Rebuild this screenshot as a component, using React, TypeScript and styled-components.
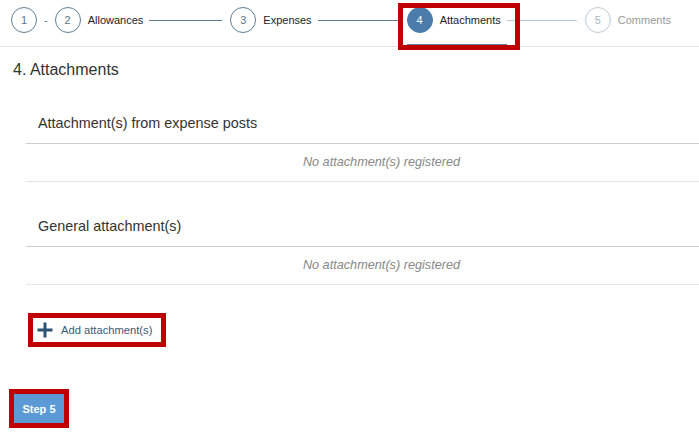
import React from 'react';
import styled, { createGlobalStyle, css } from 'styled-components';

const GlobalStyle = createGlobalStyle`
  html, body {
    margin: 0;
    padding: 0;
    background: #fff;
    font-family: "Liberation Sans", Arial, sans-serif;
    color: #333;
    overflow: hidden;
  }
`;

const ANNOTATION = '#c00000';

const Page = styled.div`
  width: 699px;
  height: 444px;
  display: flex;
  flex-direction: column;
`;

// ---- stepper ----

const Stepper = styled.nav`
  display: flex;
  height: 47px;
  box-sizing: border-box;
  border-bottom: 1px solid #dde4ea;
  padding-left: 11px;
`;

type StepState = 'done' | 'active' | 'todo';

const Step = styled.div<{ $state: StepState; $bare?: boolean }>`
  position: relative;
  display: flex;
  align-items: center;
  gap: 7px;
  padding: 0 ${(p) => (p.$bare ? 0 : 6)}px 4px 0;
  border-bottom: 2px solid
    ${(p) => (p.$state === 'active' ? '#687e92' : 'transparent')};
  font-size: 11px;
  color: ${(p) => (p.$state === 'todo' ? '#9a9a9a' : '#222')};
`;

const Circle = styled.span<{ $state: StepState }>`
  width: 26px;
  height: 26px;
  box-sizing: border-box;
  border-radius: 50%;
  display: flex;
  align-items: center;
  justify-content: center;
  font-size: 11px;
  ${(p) =>
    p.$state === 'active'
      ? css`
          background: #4a7bab;
          color: #fff;
          border: 1.5px solid #4a7bab;
        `
      : p.$state === 'todo'
        ? css`
            color: #a9b6c0;
            border: 1.5px solid #bccbd6;
          `
        : css`
            color: #5a7890;
            border: 1.5px solid #5f7d95;
          `}
`;

const Dash = styled.span`
  align-self: center;
  margin: 0 7px 6px;
  font-size: 11px;
  color: #5a7890;
`;

const Connector = styled.span<{ $width: number; $light?: boolean }>`
  align-self: center;
  margin: 0 8px 6px 0;
  width: ${(p) => p.$width}px;
  height: 1px;
  background: ${(p) => (p.$light ? '#b9c9d4' : '#5f7d95')};
`;

const StepMark = styled.span`
  position: absolute;
  left: -9px;
  right: -13px;
  top: 3px;
  bottom: -6px;
  border: 5px solid ${ANNOTATION};
  pointer-events: none;
`;

// ---- content ----

const Title = styled.h2`
  margin: 12px 0 0 13px;
  font-size: 16px;
  line-height: 21px;
  font-weight: normal;
  color: #333;
`;

const Section = styled.section`
  margin: 23px 0 0 26px;

  & + & {
    margin-top: 24px;
  }
`;

const SectionHead = styled.div`
  padding: 10px 12px;
  font-size: 14.4px;
  line-height: 20px;
  color: #333;
  border-bottom: 1px solid #cfcfcf;
`;

const EmptyRow = styled.div`
  padding: 10px 0 10px 38px;
  font-size: 12.7px;
  line-height: 17px;
  font-style: italic;
  color: #888;
  text-align: center;
  border-bottom: 1px solid #e6e6e6;
`;

const AddButton = styled.button`
  align-self: flex-start;
  margin: 33px 0 0 33px;
  height: 24px;
  display: flex;
  align-items: center;
  gap: 8px;
  padding: 0 9px 0 4px;
  background: #fff;
  border: none;
  outline: 5px solid ${ANNOTATION};
  font-family: inherit;
  font-size: 11.2px;
  color: #3a5874;
  cursor: pointer;
`;

const NextButton = styled.button`
  align-self: flex-start;
  margin: 52px 0 0 14px;
  width: 50px;
  height: 29px;
  border: none;
  background: #5b9ad4;
  outline: 5px solid ${ANNOTATION};
  font-family: inherit;
  font-size: 11px;
  font-weight: bold;
  color: #fff;
  cursor: pointer;
`;

const PlusIcon = () => (
  <svg width="16" height="16" viewBox="0 0 16 16" aria-hidden="true">
    <path d="M8 0.5v15M0.5 8h15" stroke="#2d5373" strokeWidth="3" fill="none" />
  </svg>
);

const sections = ['Attachment(s) from expense posts', 'General attachment(s)'];

export default function App() {
  return (
    <Page>
      <GlobalStyle />
      <Stepper>
        <Step $state="done" $bare>
          <Circle $state="done">1</Circle>
        </Step>
        <Dash>-</Dash>
        <Step $state="done">
          <Circle $state="done">2</Circle>
          Allowances
        </Step>
        <Connector $width={73} />
        <Step $state="done">
          <Circle $state="done">3</Circle>
          Expenses
        </Step>
        <Connector $width={81} />
        <Step $state="active">
          <Circle $state="active">4</Circle>
          Attachments
          <StepMark />
        </Step>
        <Connector $width={70} $light />
        <Step $state="todo">
          <Circle $state="todo">5</Circle>
          Comments
        </Step>
      </Stepper>

      <Title>4. Attachments</Title>

      {sections.map((name) => (
        <Section key={name}>
          <SectionHead>{name}</SectionHead>
          <EmptyRow>No attachment(s) registered</EmptyRow>
        </Section>
      ))}

      <AddButton>
        <PlusIcon />
        Add attachment(s)
      </AddButton>

      <NextButton>Step 5</NextButton>
    </Page>
  );
}
